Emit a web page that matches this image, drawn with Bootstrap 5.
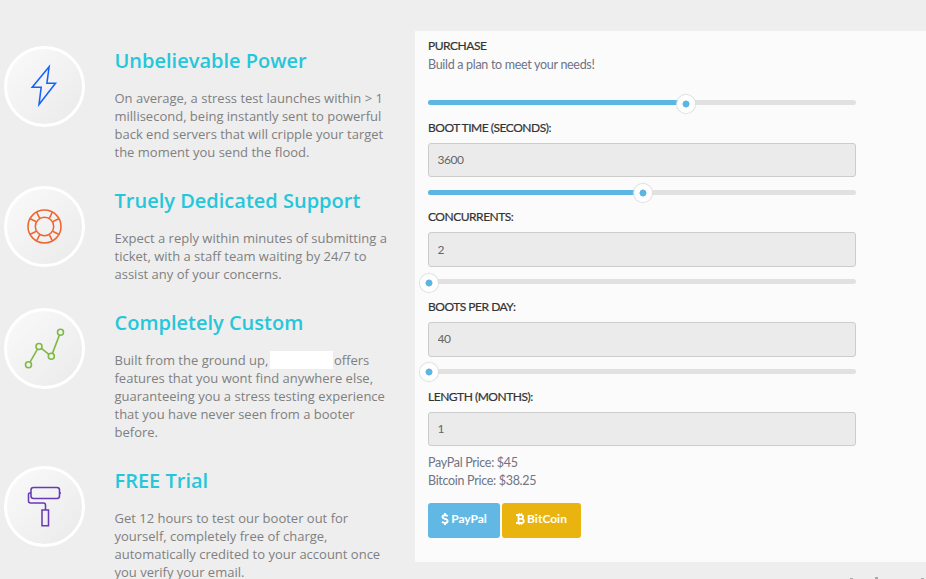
<!DOCTYPE html>
<html lang="en">
<head>
<meta charset="utf-8">
<meta name="viewport" content="width=device-width, initial-scale=1">
<title>Purchase</title>
<link href="https://cdn.jsdelivr.net/npm/bootstrap@5.3.0/dist/css/bootstrap.min.css" rel="stylesheet">
<style>
body{background:#eee;height:579px;font-family:"Open Sans",sans-serif;font-size:13px;line-height:18px;color:#808080}
.page{height:579px}
.features{width:415px;padding:46px 0 0 4px}
.feature-icon{width:81px;height:81px;border:3px solid #fff;background:linear-gradient(135deg,#fafafa,#eaeaea)}
.feature-icon svg{fill:none;stroke-width:1.55}
.feature-copy{width:300px;padding:3px 0 0 29.5px}
.feature-copy h2{font-size:20px;line-height:24px;font-weight:600;color:#26c6da;margin:0 0 16px}
.feature-copy p{margin:0 0 25px;white-space:nowrap}
.redacted{display:inline-block;width:63px;height:18px;background:#fff;vertical-align:top;margin:0 1px 0 1.5px}
.purchase{width:511px;height:531px;margin-top:31px;padding:0 70.5px 0 13px;background:#fbfbfb;font-family:Lato,sans-serif;font-size:12.5px;letter-spacing:-.3px;color:#6f7385}
.purchase h3,.purchase label{font-size:12px;line-height:18px;color:#333;font-weight:400;letter-spacing:-.48px;-webkit-text-stroke:.2px #333;margin:0}
.purchase h3{padding-top:6px;height:25px}
.intro{height:44px}
.plan-row{height:89.667px}
.plan-track{height:5px;border-radius:3px;background:#e1e1e1}
.plan-fill{height:5px;border-radius:3px;background:#5cb6e3}
.plan-knob{width:18px;height:18px;margin:0 -9px 0 0;flex:none;border-radius:50%;background:radial-gradient(circle,#5cb6e3 3.2px,#fff 3.8px);box-shadow:0 0 1px 1px #ddd;position:relative;top:1px}
.plan-row label{display:block;margin-top:13.6px}
.plan-row .form-control{height:34.6px;margin-top:6px;padding:0 8.5px 1px;font-size:12px;letter-spacing:-.5px;line-height:31px;color:#666;background:#ebebeb;border:1px solid #ccc;border-radius:3px}
.prices{margin-top:-4.7px;height:49px}
.buy{height:35px;padding:0 0 2px;font-size:12px;font-weight:700;letter-spacing:0;line-height:32px;color:#fff!important;border:0;border-radius:3px}
.buy svg{margin-right:2px;vertical-align:-2px}
.buy-paypal{width:72px;background:#61b8e4!important}
.buy-bitcoin{width:79px;background:#e9b40f!important}
</style>
</head>
<body class="overflow-hidden">
<main class="page d-flex align-items-start overflow-hidden">
<section class="features flex-shrink-0">
<div class="d-flex">
<div class="feature-icon rounded-circle flex-shrink-0"><svg width="75" height="75" viewBox="0 0 75 75" stroke="#1463ff"><path d="M42.1 17.8L25.2 38.2h9L32 55.5l16.5-21.3h-8.6z"/></svg></div>
<div class="feature-copy"><h2>Unbelievable Power</h2><p>On average, a stress test launches within &gt; 1<br>millisecond, being instantly sent to powerful<br>back end servers that will cripple your target<br>the moment you send the flood.</p></div>
</div>
<div class="d-flex">
<div class="feature-icon rounded-circle flex-shrink-0"><svg width="75" height="75" viewBox="0 0 75 75" stroke="#f0652f"><circle cx="37.5" cy="37.5" r="16.5"/><circle cx="37.5" cy="37.5" r="9.2"/><path d="M29.5 22.8l3.2 6.6M22.8 29.5l6.6 3.2M45.5 22.8l-3.2 6.6M52.2 29.5l-6.6 3.2M29.5 52.2l3.2-6.6M22.8 45.5l6.6-3.2M45.5 52.2l-3.2-6.6M52.2 45.5l-6.6-3.2"/></svg></div>
<div class="feature-copy"><h2>Truely Dedicated Support</h2><p>Expect a reply within minutes of submitting a<br>ticket, with a staff team waiting by 24/7 to<br>assist any of your concerns.</p></div>
</div>
<div class="d-flex">
<div class="feature-icon rounded-circle flex-shrink-0"><svg width="75" height="75" viewBox="0 0 75 75" stroke="#7cb940"><circle cx="21.5" cy="53.7" r="3"/><circle cx="32" cy="35.5" r="3"/><circle cx="44.3" cy="45.2" r="3"/><circle cx="53.5" cy="21.3" r="3"/><path d="M23 51.1l7.5-13M34.4 37.4l7.5 5.9M45.4 42.4l7-18.3"/></svg></div>
<div class="feature-copy"><h2>Completely Custom</h2><p>Built from the ground up,<span class="redacted"></span>offers<br>features that you wont find anywhere else,<br>guaranteeing you a stress testing experience<br>that you have never seen from a booter<br>before.</p></div>
</div>
<div class="d-flex">
<div class="feature-icon rounded-circle flex-shrink-0"><svg width="75" height="75" viewBox="0 0 75 75" stroke="#673ab7"><rect x="24" y="18.5" width="28.5" height="11" rx="2.5"/><path d="M52.5 24H54M24 24h-1.3q-1.2 0-1.2 1.2V32q0 2 2 2h13q2 0 2 2v4.5M35 41h6.5v15.8H35z"/></svg></div>
<div class="feature-copy"><h2>FREE Trial</h2><p>Get 12 hours to test our booter out for<br>yourself, completely free of charge,<br>automatically credited to your account once<br>you verify your email.</p></div>
</div>
</section>
<div class="flex-shrink-0">
<section class="purchase">
<h3>PURCHASE</h3>
<div class="intro">Build a plan to meet your needs!</div>
<div class="plan-row"><div class="plan-track"><div class="plan-fill d-flex align-items-center justify-content-end" style="width:60.3%"><span class="plan-knob"></span></div></div><label for="time">BOOT TIME (SECONDS):</label><input class="form-control" id="time" value="3600" readonly></div>
<div class="plan-row"><div class="plan-track"><div class="plan-fill d-flex align-items-center justify-content-end" style="width:50.3%"><span class="plan-knob"></span></div></div><label for="conc">CONCURRENTS:</label><input class="form-control" id="conc" value="2" readonly></div>
<div class="plan-row"><div class="plan-track"><div class="plan-fill d-flex align-items-center justify-content-end" style="width:.35%"><span class="plan-knob"></span></div></div><label for="boots">BOOTS PER DAY:</label><input class="form-control" id="boots" value="40" readonly></div>
<div class="plan-row"><div class="plan-track"><div class="plan-fill d-flex align-items-center justify-content-end" style="width:.35%"><span class="plan-knob"></span></div></div><label for="len">LENGTH (MONTHS):</label><input class="form-control" id="len" value="1" readonly></div>
<div class="prices">PayPal Price: $45<br>Bitcoin Price: $38.25</div>
<div class="d-flex" style="gap:2px">
<button class="btn buy buy-paypal" type="button"><svg width="8" height="12" viewBox="0 0 8 12" fill="none" stroke="#fff" stroke-width="1.9"><path d="M6.8 3.1Q5.6 2.2 4 2.2C2.3 2.2 1.5 3 1.5 4 1.5 6.4 6.6 5.4 6.6 8 6.6 9.2 5.6 9.9 4 9.9Q2.3 9.9 1 8.8M4 0v2.2M4 9.8V12"/></svg>PayPal</button>
<button class="btn buy buy-bitcoin" type="button"><svg width="9" height="12" viewBox="0 0 9 12" fill="none" stroke="#fff" stroke-width="1.8"><path d="M0 2h4.8Q7 2 7 3.9T4.8 5.8H2.5M4.8 5.8Q7.8 5.8 7.8 7.9T5 10H0M2.5 2v8"/><path d="M3.2 0v2M5.5 0v2M3.2 10v2M5.5 10v2" stroke-width="1.2"/></svg>BitCoin</button>
</div>
</section>
<svg class="d-block" width="511" height="17" fill="#aaa"><path d="M435 16h3v1h-3zM460 15h3v2h-3zM506 16h3v1h-3z"/></svg>
</div>
</main>
<script src="https://cdn.jsdelivr.net/npm/bootstrap@5.3.0/dist/js/bootstrap.bundle.min.js"></script>
</body>
</html>
